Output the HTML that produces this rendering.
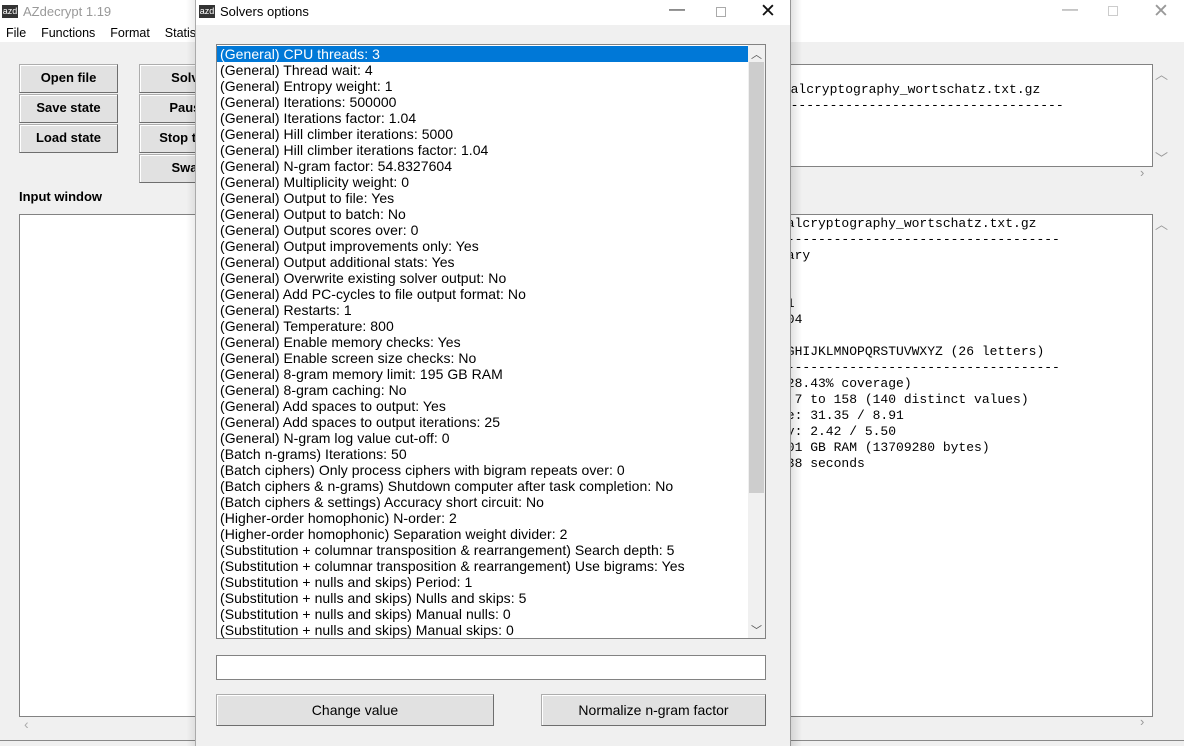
<!DOCTYPE html>
<html><head><meta charset="utf-8"><style>
*{margin:0;padding:0;box-sizing:border-box}
body{width:1184px;height:746px;overflow:hidden;background:#f0f0f0;position:relative;font-family:"Liberation Sans",sans-serif;font-size:13px;color:#000}
.a{position:absolute}
.btn{position:absolute;background:#e1e1e1;border:1px solid #adadad;border-right-color:#6e6e6e;border-bottom-color:#6e6e6e;text-align:center;font-weight:bold;font-size:13px;line-height:26px;box-shadow:inset 1px 1px 0 #fff}
.box{position:absolute;background:#fff;border:1px solid #828282}
pre{font-family:"Liberation Mono",monospace;font-size:13px;line-height:16px;position:absolute}
.lst div{height:16px;line-height:16px;padding-left:3px;white-space:nowrap;font-size:14px;letter-spacing:0.05px}
.ctl{position:absolute;font-size:16px;color:#999}
</style></head><body>
<div class="a" style="left:0;top:0;width:1184px;height:24px;background:#fff"></div>
<div class="a" style="left:2px;top:5px;width:16px;height:13px;background:#333;color:#fff;font-size:9px;line-height:13px;text-align:center">azd</div>
<div class="a" style="left:23px;top:4px;color:#999;font-size:13px">AZdecrypt 1.19</div>
<div class="ctl" style="left:1062px;top:1px">—</div>
<div class="a" style="left:1108px;top:6px;width:10px;height:10px;border:1px solid #ccc"></div>
<div class="ctl" style="left:1153px;top:0px;font-size:19px">✕</div>
<div class="a" style="left:0;top:24px;width:1184px;height:18px;background:#fff"></div>
<div class="a" style="left:6px;top:26px;font-size:12.5px;word-spacing:4px">File&nbsp;&nbsp;Functions&nbsp;&nbsp;Format&nbsp;&nbsp;Statistics</div>
<div class="btn" style="left:19px;top:64px;width:99px;height:29px">Open file</div>
<div class="btn" style="left:19px;top:94px;width:99px;height:29px">Save state</div>
<div class="btn" style="left:19px;top:124px;width:99px;height:29px">Load state</div>
<div class="btn" style="left:139px;top:64px;width:99px;height:29px">Solve</div>
<div class="btn" style="left:139px;top:94px;width:99px;height:29px">Pause</div>
<div class="btn" style="left:139px;top:124px;width:99px;height:29px">Stop task</div>
<div class="btn" style="left:139px;top:154px;width:99px;height:29px">Swap</div>
<div class="a" style="left:19px;top:189px;font-weight:bold">Input window</div>
<div class="box" style="left:19px;top:214px;width:800px;height:503px"></div>
<div class="a" style="left:24px;top:716px;color:#aaa;font-size:14px">‹</div>
<div class="box" style="left:700px;top:64px;width:453px;height:103px"></div>
<div class="box" style="left:700px;top:214px;width:453px;height:503px"></div>
<div class="ctl" style="left:1155px;top:64px;font-size:13px">︿</div>
<div class="ctl" style="left:1155px;top:148px;font-size:13px">﹀</div>
<div class="ctl" style="left:1140px;top:165px;font-size:13px">›</div>
<div class="ctl" style="left:1155px;top:214px;font-size:13px">︿</div>
<div class="ctl" style="left:1140px;top:714px;font-size:13px">›</div>
<pre style="left:775px;top:82px">tialcryptography_wortschatz.txt.gz
-------------------------------------</pre>
<pre style="left:779px;top:216px">ialcryptography_wortschatz.txt.gz
------------------------------------
mary


 1
 04

FGHIJKLMNOPQRSTUVWXYZ (26 letters)
------------------------------------
(28.43% coverage)
: 7 to 158 (140 distinct values)
ge: 31.35 / 8.91
ty: 2.42 / 5.50
001 GB RAM (13709280 bytes)
.38 seconds</pre>
<div class="a" style="left:0;top:740px;width:1184px;height:6px;background:#f0f0f0;border-top:1px solid #888"></div>
<div class="a" style="left:186px;top:0;width:10px;height:746px;background:linear-gradient(to right,rgba(0,0,0,0),rgba(0,0,0,.08))"></div>
<div class="a" style="left:195px;top:0;width:596px;height:746px;background:#f0f0f0;border-left:1px solid #aaa;border-right:1px solid #aaa"></div>
<div class="a" style="left:790px;top:0;width:12px;height:746px;background:linear-gradient(to right,rgba(0,0,0,.12),rgba(0,0,0,0))"></div>
<div class="a" style="left:196px;top:0;width:594px;height:25px;background:#fff"></div>
<div class="a" style="left:199px;top:5px;width:16px;height:13px;background:#333;color:#fff;font-size:9px;line-height:13px;text-align:center">azd</div>
<div class="a" style="left:220px;top:4px">Solvers options</div>
<div class="a" style="left:669px;top:1px;font-size:16px;color:#333">—</div>
<div class="a" style="left:716px;top:7px;width:10px;height:10px;border:1px solid #aaa"></div>
<div class="a" style="left:760px;top:0px;font-size:19px;color:#111">✕</div>
<div class="box lst" style="left:216px;top:44px;width:550px;height:595px;overflow:hidden;padding-top:1px">
<div style="background:#0078d7;color:#fff;width:531px">(General) CPU threads: 3</div>
<div>(General) Thread wait: 4</div>
<div>(General) Entropy weight: 1</div>
<div>(General) Iterations: 500000</div>
<div>(General) Iterations factor: 1.04</div>
<div>(General) Hill climber iterations: 5000</div>
<div>(General) Hill climber iterations factor: 1.04</div>
<div>(General) N-gram factor: 54.8327604</div>
<div>(General) Multiplicity weight: 0</div>
<div>(General) Output to file: Yes</div>
<div>(General) Output to batch: No</div>
<div>(General) Output scores over: 0</div>
<div>(General) Output improvements only: Yes</div>
<div>(General) Output additional stats: Yes</div>
<div>(General) Overwrite existing solver output: No</div>
<div>(General) Add PC-cycles to file output format: No</div>
<div>(General) Restarts: 1</div>
<div>(General) Temperature: 800</div>
<div>(General) Enable memory checks: Yes</div>
<div>(General) Enable screen size checks: No</div>
<div>(General) 8-gram memory limit: 195 GB RAM</div>
<div>(General) 8-gram caching: No</div>
<div>(General) Add spaces to output: Yes</div>
<div>(General) Add spaces to output iterations: 25</div>
<div>(General) N-gram log value cut-off: 0</div>
<div>(Batch n-grams) Iterations: 50</div>
<div>(Batch ciphers) Only process ciphers with bigram repeats over: 0</div>
<div>(Batch ciphers &amp; n-grams) Shutdown computer after task completion: No</div>
<div>(Batch ciphers &amp; settings) Accuracy short circuit: No</div>
<div>(Higher-order homophonic) N-order: 2</div>
<div>(Higher-order homophonic) Separation weight divider: 2</div>
<div>(Substitution + columnar transposition &amp; rearrangement) Search depth: 5</div>
<div>(Substitution + columnar transposition &amp; rearrangement) Use bigrams: Yes</div>
<div>(Substitution + nulls and skips) Period: 1</div>
<div>(Substitution + nulls and skips) Nulls and skips: 5</div>
<div>(Substitution + nulls and skips) Manual nulls: 0</div>
<div>(Substitution + nulls and skips) Manual skips: 0</div>
</div>
<div class="a" style="left:748px;top:45px;width:17px;height:593px;background:#f0f0f0"></div>
<div class="a" style="left:749px;top:62px;width:15px;height:431px;background:#cdcdcd"></div>
<div class="a" style="left:751px;top:46px;font-size:11px;color:#555">︿</div>
<div class="a" style="left:751px;top:622px;font-size:11px;color:#555">﹀</div>
<div class="box" style="left:216px;top:655px;width:550px;height:25px"></div>
<div class="btn" style="left:216px;top:694px;width:278px;height:32px;line-height:30px;font-weight:normal;font-size:14px">Change value</div>
<div class="btn" style="left:541px;top:694px;width:225px;height:32px;line-height:30px;font-weight:normal;font-size:14px">Normalize n-gram factor</div>
</body></html>
